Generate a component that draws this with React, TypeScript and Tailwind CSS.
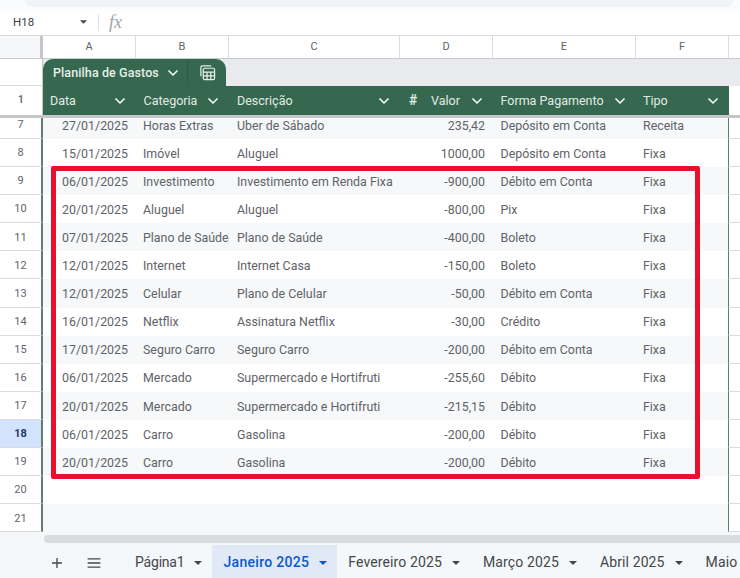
import React from "react";

const rows: string[][] = [
  ["7", "27/01/2025", "Horas Extras", "Uber de Sábado", "235,42", "Depósito em Conta", "Receita"],
  ["8", "15/01/2025", "Imóvel", "Aluguel", "1000,00", "Depósito em Conta", "Fixa"],
  ["9", "06/01/2025", "Investimento", "Investimento em Renda Fixa", "-900,00", "Débito em Conta", "Fixa"],
  ["10", "20/01/2025", "Aluguel", "Aluguel", "-800,00", "Pix", "Fixa"],
  ["11", "07/01/2025", "Plano de Saúde", "Plano de Saúde", "-400,00", "Boleto", "Fixa"],
  ["12", "12/01/2025", "Internet", "Internet Casa", "-150,00", "Boleto", "Fixa"],
  ["13", "12/01/2025", "Celular", "Plano de Celular", "-50,00", "Débito em Conta", "Fixa"],
  ["14", "16/01/2025", "Netflix", "Assinatura Netflix", "-30,00", "Crédito", "Fixa"],
  ["15", "17/01/2025", "Seguro Carro", "Seguro Carro", "-200,00", "Débito em Conta", "Fixa"],
  ["16", "06/01/2025", "Mercado", "Supermercado e Hortifruti", "-255,60", "Débito", "Fixa"],
  ["17", "20/01/2025", "Mercado", "Supermercado e Hortifruti", "-215,15", "Débito", "Fixa"],
  ["18", "06/01/2025", "Carro", "Gasolina", "-200,00", "Débito", "Fixa"],
  ["19", "20/01/2025", "Carro", "Gasolina", "-200,00", "Débito", "Fixa"],
  ["20", "", "", "", "", "", ""],
  ["21", "", "", "", "", "", ""],
];

const colHeads: [string, string][] = [
  ["A", "w-[93px]"],
  ["B", "w-[93px]"],
  ["C", "w-[171px]"],
  ["D", "w-[93px]"],
  ["E", "w-[143px]"],
  ["F", "w-[93px]"],
];

function Caret({ className }: { className: string }) {
  return (
    <svg viewBox="0 0 8 4" className={className} fill="currentColor">
      <path d="M0 0h8L4 4z" />
    </svg>
  );
}

function Chevron() {
  return (
    <svg viewBox="0 0 20 20" className="w-[20px] h-[20px] shrink-0" fill="none" stroke="#ffffff" strokeWidth="1.5">
      <path d="M5.5 7.5 10 12l4.5-4.5" />
    </svg>
  );
}

function HeadCell({ label, w, pl, hash }: { label: string; w: string; pl: string; hash?: boolean }) {
  return (
    <div className={`${w} ${pl} h-full shrink-0 flex items-center pr-[6px] text-[#e3ebe6]`}>
      {hash && <span className="ml-[1px] w-[22px] text-[14px] font-bold text-[#dfe8e3]">#</span>}
      <span className="flex-1 truncate pt-[1px]">{label}</span>
      <Chevron />
    </div>
  );
}

function Tab({ label, className, noCaret }: { label: string; className: string; noCaret?: boolean }) {
  return (
    <div className={`h-full shrink-0 flex items-center pt-[3px] pl-[11px] gap-[10px] text-[14px] ${className}`}>
      <span>{label}</span>
      {!noCaret && <Caret className="w-[8px] h-[4px]" />}
    </div>
  );
}

export default function App() {
  return (
    <div
      className="relative w-[740px] h-[578px] overflow-hidden bg-white flex flex-col"
      style={{ fontFamily: "Roboto, 'Liberation Sans', sans-serif" }}
    >
      {/* top band */}
      <div className="h-[9px] bg-[#f9fbfd] shrink-0 flex">
        <div className="ml-[25px] mr-[7px] flex-1 h-[7px] bg-[#f0f4f9] rounded-bl-[6px] rounded-br-[6px]" />
      </div>

      {/* formula bar */}
      <div className="h-[27px] shrink-0 flex items-center border-b border-[#dadce0]">
        <span className="ml-[13px] w-[67px] text-[11.5px] text-[#3c4043] pt-[1px]">H18</span>
        <Caret className="w-[7px] h-[4px] text-[#444746]" />
        <div className="ml-[11px] w-px h-[16px] bg-[#e0e2e5]" />
        <span
          className="ml-[10px] text-[18px] leading-none italic text-[#a0a3a7]"
          style={{ fontFamily: "'Liberation Serif', serif" }}
        >
          fx
        </span>
      </div>

      {/* column letters */}
      <div className="h-[23px] shrink-0 flex bg-white border-b border-[#c7c9cc] text-[11px] text-[#5f6368]">
        <div className="w-[43px] shrink-0 bg-[#f6f7f8] border-r-[3px] border-[#c4c6c9]" />
        {colHeads.map(([l, w]) => (
          <div key={l} className={`${w} shrink-0 flex items-center justify-center border-r border-[#dadce0]`}>
            {l}
          </div>
        ))}
      </div>

      {/* table title row */}
      <div className="h-[27px] shrink-0 flex bg-[#e8eaed]">
        <div className="w-[43px] shrink-0 bg-white border-b border-[#dadce0] border-r border-r-[#c4c6c9]" />
        <div className="w-[183px] shrink-0 bg-[#35684f] rounded-t-[10px] flex items-center text-[#e8efeb]">
          <div className="w-[145px] h-full pl-[10px] flex items-center border-r border-[#2e5c46] gap-[4px]">
            <span className="text-[12.5px] font-medium tracking-[0.1px] pt-[1px]">Planilha de Gastos</span>
            <Chevron />
          </div>
          <svg viewBox="0 0 18 18" className="ml-[11px] w-[17px] h-[17px]" fill="none" stroke="#e8efeb" strokeWidth="1.3">
            <path d="M2 13V3.5A1.5 1.5 0 0 1 3.5 2H13" />
            <rect x="4.5" y="4.5" width="12" height="12" rx="1.5" />
            <path d="M4.5 8.5h12M8.5 8.5v8M12.5 8.5v8M4.5 12.5h12" />
          </svg>
        </div>
      </div>

      {/* header row */}
      <div className="h-[29px] shrink-0 flex">
        <div className="w-[43px] shrink-0 bg-white flex items-center justify-center text-[11px] font-medium text-[#5f6368] border-r border-[#c4c6c9]">
          1
        </div>
        <div className="flex bg-[#35684f] text-[12.5px] h-full">
          <HeadCell label="Data" w="w-[93px]" pl="pl-[7px]" />
          <HeadCell label="Categoria" w="w-[93px]" pl="pl-[7.5px]" />
          <HeadCell label="Descrição" w="w-[171px]" pl="pl-[8px]" />
          <HeadCell label="Valor" w="w-[93px]" pl="pl-[8px]" hash />
          <HeadCell label="Forma Pagamento" w="w-[143px]" pl="pl-[7.5px]" />
          <HeadCell label="Tipo" w="w-[93px]" pl="pl-[7px]" />
        </div>
      </div>

      {/* freeze line */}
      <div className="h-[3px] shrink-0 bg-[#c4c6c9]" />

      {/* data rows */}
      <div className="shrink-0 flex flex-col">
        {rows.map((r, i) => {
          const selected = r[0] === "18";
          return (
            <div
              key={r[0]}
              className={`${i === 0 ? "h-[21px]" : "h-[28.1px]"} flex items-end overflow-hidden shrink-0 text-[12.4px] text-[#5f6368]`}
            >
              <div
                className={`w-[43px] h-[28.1px] shrink-0 flex items-center justify-center pt-[2px] text-[11px] border-b border-[#dadce0] border-r-[2px] border-r-[#5d7f6e] ${
                  selected ? "bg-[#d3e3fd] font-bold text-[#1f3760]" : "bg-white"
                }`}
              >
                {r[0]}
              </div>
              <div
                className={`h-[28.1px] flex items-center pt-[2px] ${i % 2 === 0 ? "bg-[#f6f8f9]" : "bg-white"}`}
              >
                <div className="w-[92px] shrink-0 text-right pr-[7px]">{r[1]}</div>
                <div className="w-[93px] shrink-0 pl-[8px] whitespace-nowrap">{r[2]}</div>
                <div className="w-[171px] shrink-0 pl-[9px] whitespace-nowrap">{r[3]}</div>
                <div className="w-[93px] shrink-0 pr-[7px] text-right">{r[4]}</div>
                <div className="w-[143px] shrink-0 pl-[8.5px]">{r[5]}</div>
                <div className="w-[93px] shrink-0 pl-[8px]">{r[6]}</div>
              </div>
              <div className="flex-1 h-[28.1px] border-b border-l border-[#dadce0] border-l-[#5d7f6e]" />
            </div>
          );
        })}
      </div>

      {/* scrollbar strip */}
      <div className="h-[12.6px] shrink-0 bg-[#f5f6f7] pl-[44px] pt-[2.6px]">
        <div className="h-[8px] bg-[#dadce0] rounded-l-[5px]" />
      </div>

      {/* sheet tabs */}
      <div className="flex-1 min-h-0 bg-[#f5f8fb] flex items-center overflow-hidden">
        <svg viewBox="0 0 12 12" className="ml-[52px] mt-[3px] w-[10px] h-[10px] shrink-0" fill="none" stroke="#444746" strokeWidth="1.6">
          <path d="M6 0v12M0 6h12" />
        </svg>
        <svg viewBox="0 0 14 11" className="ml-[25px] mt-[3px] w-[14px] h-[10px] shrink-0" fill="none" stroke="#444746" strokeWidth="1.4">
          <path d="M0 1h14M0 5.5h14M0 10h14" />
        </svg>
        <div className="ml-[23px] h-full flex">
          <Tab label="Página1" className="pr-[10px] text-[#444746] tracking-[-0.2px]" />
          <Tab label="Janeiro 2025" className="pr-[10px] bg-[#e1e9f7] text-[#0b57d0] font-medium tracking-[0.3px]" />
          <Tab label="Fevereiro 2025" className="pr-[12px] text-[#444746] tracking-[0.12px]" />
          <Tab label="Março 2025" className="pr-[12px] text-[#444746] tracking-[0.12px]" />
          <Tab label="Abril 2025" className="pr-[12px] text-[#444746] tracking-[0.12px]" />
          <Tab label="Maio" noCaret className="text-[#444746] tracking-[0.12px]" />
        </div>
      </div>

      {/* red annotation rectangle */}
      <div className="absolute left-[51px] top-[166px] w-[649px] h-[313px] border-[5px] border-[#e8112d] rounded-[2px] pointer-events-none" />
    </div>
  );
}
